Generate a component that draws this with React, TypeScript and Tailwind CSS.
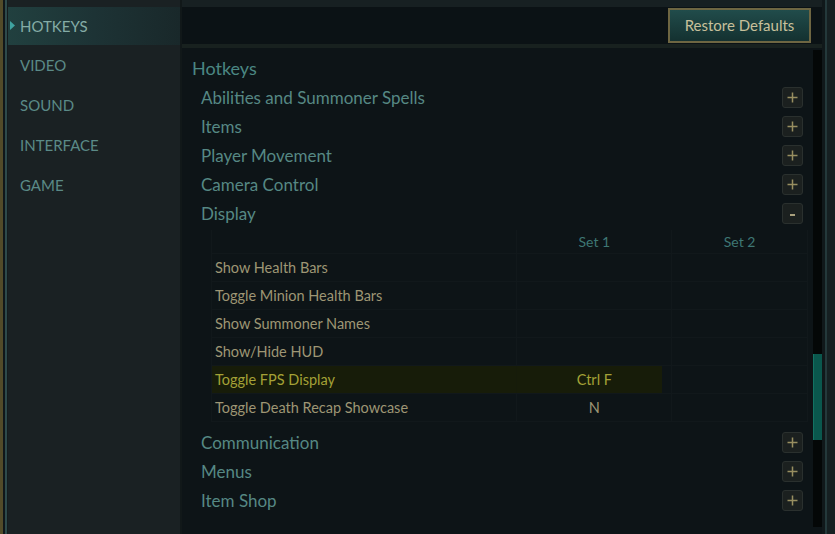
import type { ReactNode } from "react";

const sideItems = ["HOTKEYS", "VIDEO", "SOUND", "INTERFACE", "GAME"];

const topGroups = [
  { label: "Abilities and Summoner Spells" },
  { label: "Items" },
  { label: "Player Movement" },
  { label: "Camera Control" },
];

const bottomGroups = ["Communication", "Menus", "Item Shop"];

const displayRows = [
  { name: "Show Health Bars", set1: "", set2: "" },
  { name: "Toggle Minion Health Bars", set1: "", set2: "" },
  { name: "Show Summoner Names", set1: "", set2: "" },
  { name: "Show/Hide HUD", set1: "", set2: "" },
  { name: "Toggle FPS Display", set1: "Ctrl F", set2: "", active: true },
  { name: "Toggle Death Recap Showcase", set1: "N", set2: "" },
];

function ToggleBox({ open = false }: { open?: boolean }) {
  return (
    <span className="flex h-[21px] w-[21px] items-center justify-center rounded-[3px] border border-[#2a302e] bg-[#1b201f]">
      <svg width="13" height="13" viewBox="0 0 13 13" aria-hidden="true">
        {open ? (
          <rect x="4" y="7" width="5" height="2" fill="#a89f7c" />
        ) : (
          <>
            <rect x="1.5" y="5.75" width="10" height="1.5" fill="#988e60" />
            <rect x="5.75" y="1.5" width="1.5" height="10" fill="#988e60" />
          </>
        )}
      </svg>
    </span>
  );
}

function GroupRow({ children, open = false }: { children: ReactNode; open?: boolean }) {
  return (
    <div className="flex h-[29px] items-center justify-between pl-[19px] pr-[10px]">
      <span className="text-[17px] text-[#568884]">{children}</span>
      <ToggleBox open={open} />
    </div>
  );
}

function DisplayTable() {
  return (
    <div className="ml-[29px] mt-[2px] w-[597px] border-l border-[#11181b]">
      <div className="flex h-[24px] border-b border-[#11181b] text-[14px] text-[#3e7774]">
        <div className="w-[306px] border-r border-[#11181b]" />
        <div className="flex w-[155px] items-center justify-center border-r border-[#11181b]">Set 1</div>
        <div className="flex w-[136px] items-center justify-center border-r border-[#11181b]">Set 2</div>
      </div>
      {displayRows.map((row) => (
        <div
          key={row.name}
          className="flex h-[28px] border-b border-[#11181b] text-[14.5px]"
        >
          <div
            className={
              row.active
                ? "flex w-[306px] items-center border-r border-[#161b0a] bg-[#171c09] pl-[3px] text-[#a4a136]"
                : "flex w-[306px] items-center border-r border-[#11181b] pl-[3px] text-[#9e9674]"
            }
          >
            {row.name}
          </div>
          <div className="flex w-[155px] border-r border-[#11181b]">
            <div
              className={
                row.active
                  ? "mr-[9px] flex flex-1 items-center justify-center bg-[#171c09] pl-[9px] text-[#a4a136]"
                  : "flex flex-1 items-center justify-center text-[#9e9674]"
              }
            >
              {row.set1}
            </div>
          </div>
          <div className="flex w-[136px] items-center justify-center border-r border-[#11181b] text-[#9e9674]">
            {row.set2}
          </div>
        </div>
      ))}
    </div>
  );
}

export default function App() {
  return (
    <div className="flex h-[534px] w-[835px] overflow-hidden bg-[#172022] font-['Lato',sans-serif]">
      <div className="w-[3px] bg-[#524b29]" />
      <div className="w-[2px] bg-[#10171a]" />
      <div className="w-[2px] bg-[#2e4a4b]" />
      <div className="w-[1px] bg-[#151c1e]" />

      <nav className="flex w-[172px] flex-col bg-[#1a2123] pt-[7px]">
        {sideItems.map((item, i) =>
          i === 0 ? (
            <div
              key={item}
              className="relative flex h-[38px] items-center bg-gradient-to-r from-[#21403f] via-[#1d3335] to-[#19282a] pl-[12px] text-[15px] text-[#84aca6]"
            >
              <svg
                className="absolute left-[2px] top-[14px]"
                width="5"
                height="9"
                viewBox="0 0 5 9"
                aria-hidden="true"
              >
                <path d="M0 0 L5 4.5 L0 9 Z" fill="#3fa3a0" />
              </svg>
              {item}
            </div>
          ) : (
            <div
              key={item}
              className="flex h-[40px] items-center pl-[12px] text-[15px] text-[#5b8a87]"
            >
              {item}
            </div>
          ),
        )}
      </nav>

      <div className="w-[2px] bg-[#111819]" />

      <main className="flex w-[640px] flex-col pt-[7px]">
        <div className="flex h-[37px] items-center justify-end bg-[#0b1215] pr-[11px]">
          <button className="h-[35px] w-[143px] border-2 border-[#6e6642] bg-gradient-to-b from-[#214c4b] to-[#143130] text-[15px] text-[#c8c09b]">
            Restore Defaults
          </button>
        </div>
        <div className="h-[4px] bg-[#18211f]" />

        <div className="flex flex-1 bg-[#0d1417]">
          <div className="flex flex-1 flex-col pt-[6px]">
            <div className="flex h-[29px] items-center pl-[10px] text-[18px] text-[#4b8783]">
              Hotkeys
            </div>
            {topGroups.map((g) => (
              <GroupRow key={g.label}>{g.label}</GroupRow>
            ))}
            <GroupRow open>Display</GroupRow>
            <DisplayTable />
            <div className="mt-[6px]">
              {bottomGroups.map((g) => (
                <GroupRow key={g}>{g}</GroupRow>
              ))}
            </div>
          </div>

          <div className="flex w-[9px] flex-col pb-[7px] pt-[2px]">
            <div className="flex flex-1 flex-col bg-[#040707]">
              <div className="h-[304px]" />
              <div className="h-[86px] border-l border-[#127262] bg-[#0a574d]" />
            </div>
          </div>
        </div>
      </main>

      <div className="w-[3px] bg-[#10181a]" />
      <div className="w-[2px] bg-[#24393b]" />
      <div className="flex-1 bg-[#162022]" />
    </div>
  );
}
